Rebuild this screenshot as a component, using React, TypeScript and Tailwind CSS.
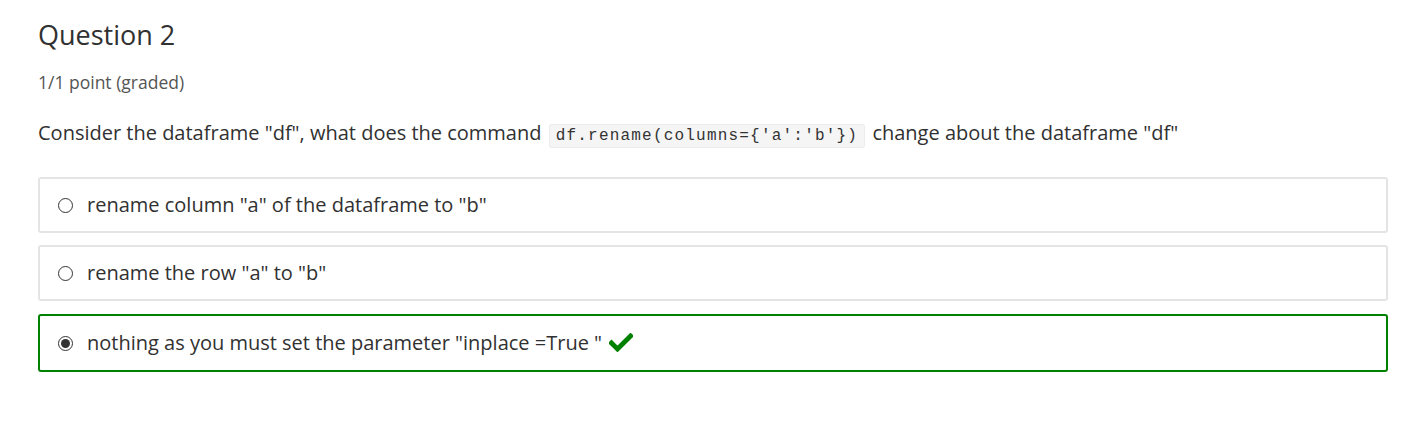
import React from "react";

const Check = () => (
  <svg width="24" height="19" viewBox="0 0 24 19" className="inline-block ml-[7px] -mt-[5px]">
    <path d="M2.5 10 L8.5 16 L21.5 3" stroke="#008100" strokeWidth="4.8" fill="none" strokeLinecap="square" />
  </svg>
);

const Radio = ({ checked }: { checked?: boolean }) => (
  <span className="inline-flex items-center justify-center w-[15px] h-[15px] rounded-full border border-[#333] bg-white shrink-0">
    {checked && <span className="w-[9px] h-[9px] rounded-full bg-[#333]" />}
  </span>
);

export default function App() {
  const options = [
    { text: 'rename column "a" of the dataframe to "b"' },
    { text: 'rename the row "a" to "b"' },
    { text: 'nothing as you must set the parameter "inplace =True "', checked: true },
  ];
  return (
    <div className="bg-white w-[1417px] h-[421px] pl-[38px] pr-[29px] pt-[16px]" style={{ fontFamily: '"Open Sans", sans-serif' }}>
      <h3 className="text-[27px] leading-[38px] text-[#313131] font-normal">Question 2</h3>
      <div className="mt-[15px] text-[17.5px] leading-[26px] text-[#555]">1/1 point (graded)</div>
      <p className="mt-[23px] text-[20px] leading-[30px] text-[#313131]">
        Consider the dataframe "df", what does the command{" "}
        <code className="mx-[2px] px-[6px] py-[2px] text-[16px] tracking-[1.2px] bg-[#f5f5f5] border border-[#ececec] rounded-[3px] text-[#333]" style={{ fontFamily: '"Liberation Mono", monospace' }}>
          df.rename(columns={"{"}'a':'b'{"}"})
        </code>{" "}
        change about the dataframe "df"
      </p>
      <div className="mt-[26px] flex flex-col gap-[12px]">
        {options.map((o, i) => (
          <div
            key={i}
            className={
              o.checked
                ? "flex items-center h-[58px] border-2 border-[#008100] rounded-[3px] pl-[18px] mt-[1px]"
                : "flex items-center h-[56px] border-2 border-[#e4e4e4] rounded-[3px] pl-[18px]"
            }
          >
            <Radio checked={o.checked} />
            <span className="ml-[14px] text-[20px] text-[#313131]">
              {o.text}
              {o.checked && <Check />}
            </span>
          </div>
        ))}
      </div>
    </div>
  );
}
